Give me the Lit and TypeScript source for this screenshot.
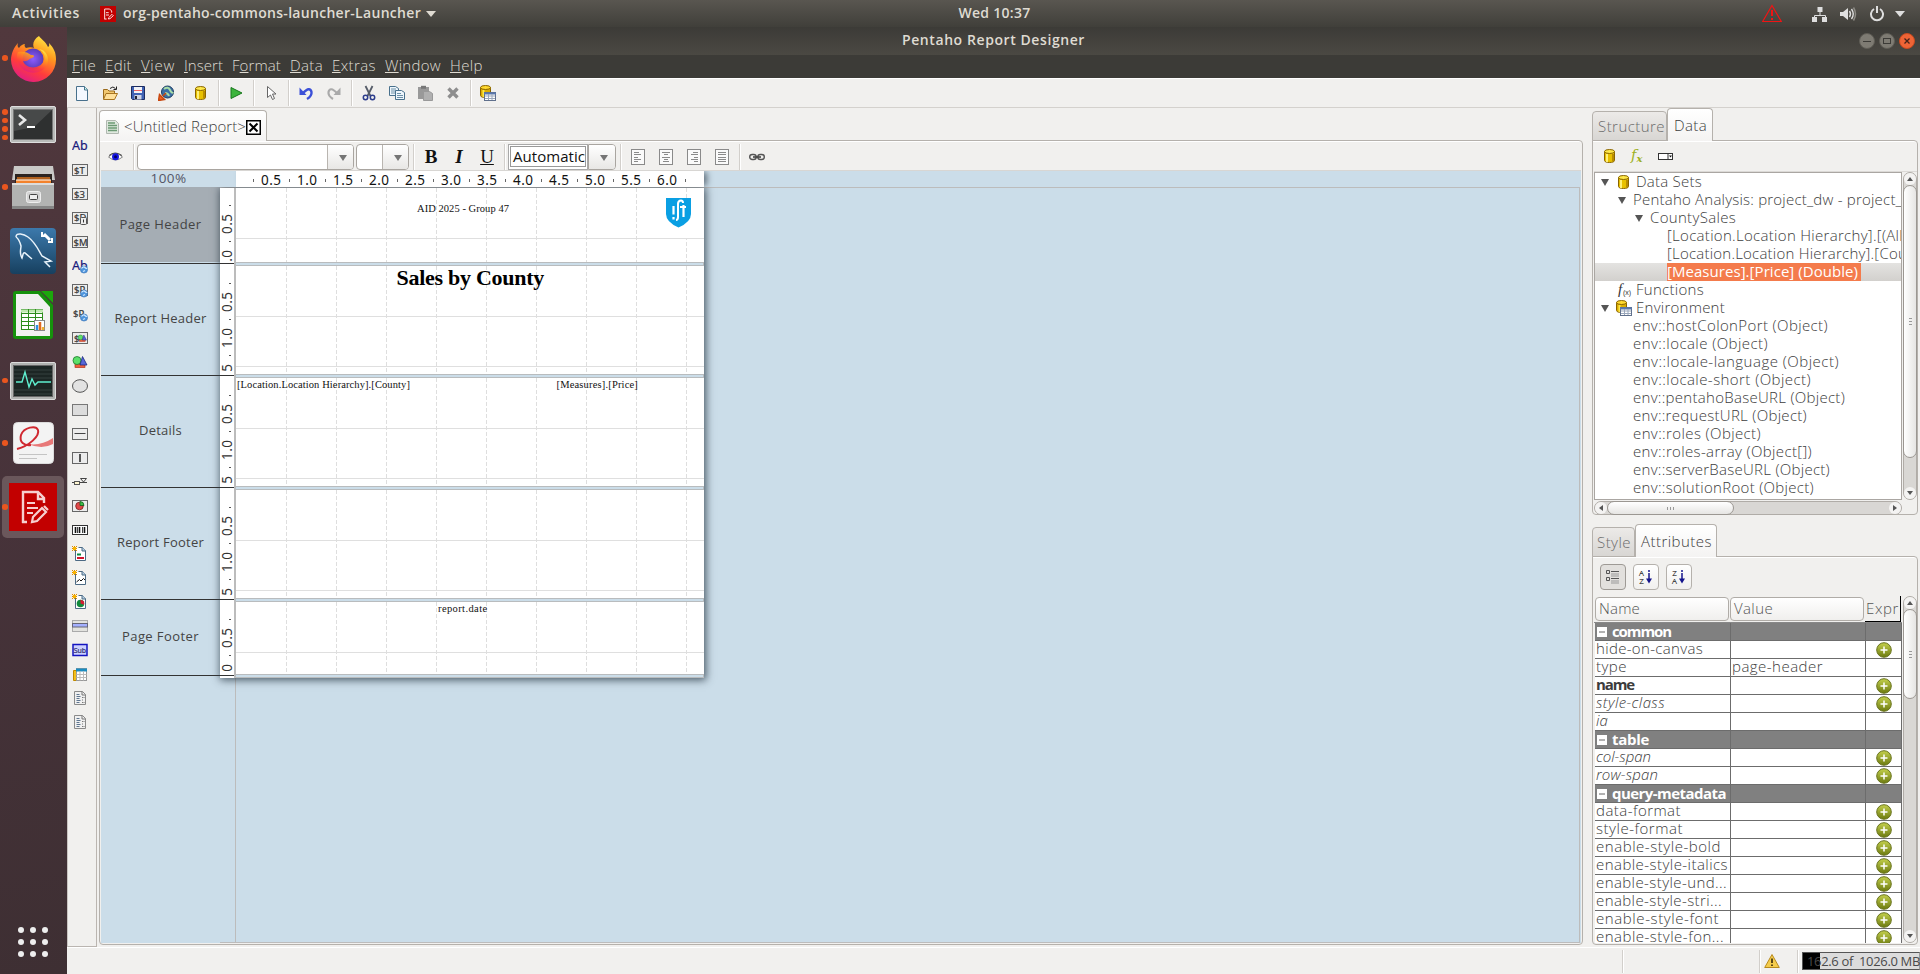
import { LitElement, html, svg, css } from "lit";
import { customElement, property } from "lit/decorators.js";
import { classMap } from "lit/directives/class-map.js";

/** Text run whose tracking is adjusted so that it fills an exact width. */
@customElement("fit-text")
class FitText extends LitElement {
  @property({ type: Number }) w = 0;
  static styles = css`
    :host { display: inline-block; white-space: pre; flex: none; transform: translateY(-1px); }
    span { display: inline-block; white-space: pre; }
  `;
  render() { return html`<span><slot></slot></span>`; }
  updated() {
    const s = this.renderRoot.querySelector("span") as HTMLElement;
    const n = (this.textContent || "").length;
    if (!this.w || !n) return;
    s.style.letterSpacing = "0px";
    const natural = s.getBoundingClientRect().width;
    s.style.letterSpacing = (this.w - natural) / n + "px";
  }
}

const t = (text: unknown, w: number) => html`<fit-text .w=${w}>${text}</fit-text>`;
const ic = (body: unknown, w = 16, h = 16, vb = `0 0 ${w} ${h}`) =>
  html`<svg class="ic" width=${w} height=${h} viewBox=${vb} fill="none">${body}</svg>`;

/* ---------- shared icon parts ---------- */
const cyl = svg`<path d="M2.500 3.500v9c0 1.200 2 2 5 2s5-.8 5-2v-9z" fill="#e8c100" stroke="#8a6500"/><path d="M5 6v8" stroke="#fff07a" stroke-width="2"/><path d="M11 6v7" stroke="#b98d00" stroke-width="2"/><ellipse cx="7.500" cy="3.500" rx="5" ry="2" fill="#ffe94a" stroke="#8a6500"/>`;
const cylTable = svg`<path d="M.5 2.500v8c0 1.200 2 2 5 2s5-.8 5-2v-8z" fill="#dcae00" stroke="#8a6500"/><path d="M3.500 5v7" stroke="#ffe84a" stroke-width="2"/><ellipse cx="5.500" cy="2.500" rx="5" ry="2" fill="#ffd92e" stroke="#8a6500"/><rect x="4.500" y="7.500" width="11" height="8" fill="#fff" stroke="#60708c"/><path d="M4 8.500h12" stroke="#5a78ac" stroke-width="2"/><path d="M5 11h10M5 13.500h10M8.500 9v6M12 9v6" stroke="#9aa7bb"/>`;
const star = svg`<path d="M0 0h1v1h1v-1h1v1h1v-1h1v1h-1v1h1v1h-1v1h1v1h-1v-1h-1v1h-1v-1h-1v1h-1v-1h1v-1h-1v-1h1v-1h-1z" fill="#e08c00"/><rect x="1" y="1" width="3" height="3" fill="#f8b400"/>`;
const page = svg`<path d="M3.500 3v11.500h10V4.500l-3-3H6.500" fill="#fff" stroke="#4d6a84"/><path d="M10 1v4h4" fill="#b6cde0" stroke="#4d6a84"/>`;
const box = svg`<rect x=".5" y="2.500" width="15" height="11" fill="#ececec" stroke="#666"/>`;
const tx = (x: number, y: number, s: string, c = "#333", size = 9.500) =>
  svg`<text x=${x} y=${y} font-family="Noto Sans, sans-serif" font-size=${size} fill=${c} stroke=${c} stroke-width=".2">${s}</text>`;
const globe = svg`<circle cx="12" cy="11.500" r="3.600" fill="#4f95dc" stroke="#3770b4" stroke-width=".6"/><path d="M9.500 10.500q2-2.500 3.500-1t2 .5M11 13.500l2-1" stroke="#cfe8ff" stroke-width="1.200"/>`;
const shapes = svg`<rect x="3" y="10" width="10" height="3.500" fill="#f0603c" stroke="#a0200c" stroke-width=".6"/><circle cx="5" cy="6.500" r="4" fill="#5ce06a" stroke="#207a2c" stroke-width=".8"/><path d="M10.500 2.500l4.500 8.500h-7z" fill="#5666d8" stroke="#1c2880" stroke-width=".8"/>`;
const doc = svg`<path d="M2.500 1.500h8l3 3v10h-11z" fill="#f0f0f0" stroke="#8a8a8a"/><path d="M10 1.500v3.500h3.500" stroke="#777"/><path d="M4.500 4.500h3M4.500 6.500h4M4.500 8.500h3M4.500 10.500h4M4.500 12.500h3" stroke="#5f7690"/><path d="M10.500 7v1M10.500 9.500v1M10.500 12v1M12 7v1M12 12v1" stroke="#777"/>`;

const PALETTE = [
  tx(0, 12, "Ab", "#18187a", 12.500),
  svg`${box}${tx(2, 11.500, "$T")}`,
  svg`${box}${tx(2, 11.500, "$3")}`,
  svg`${box}${tx(2, 11, "$D")}<rect x="8.500" y="7.500" width="6" height="7" rx="1" fill="#eee" stroke="#555"/><path d="M11.500 9.500v3" stroke="#333"/>`,
  svg`${box}${tx(1.500, 11.500, "$M")}`,
  svg`${tx(0, 12, "Ab", "#18187a", 12.500)}${globe}`,
  svg`${box}${tx(2, 11, "$P")}${globe}`,
  svg`${tx(1, 10.500, "$P")}${globe}`,
  svg`${box}${tx(2, 11.500, "$")}<g transform="translate(5.500,3.500) scale(.6)">${shapes}</g>`,
  shapes,
  svg`<ellipse cx="8" cy="8" rx="7.500" ry="6.300" fill="#e2e2e2" stroke="#555"/>`,
  svg`<rect x=".5" y="2.500" width="15" height="11" fill="#dcdcdc" stroke="#777"/>`,
  svg`${box}<path d="M2.500 7.500h11" stroke="#444"/>`,
  svg`${box}<path d="M8 4v8" stroke="#555" stroke-width="2"/>`,
  svg`<path d="M0 8.500h15M8.500 4.500h6l-3 3.500z" stroke="#444"/><rect x="2.500" y="7.500" width="5" height="3" fill="#fff6d0" stroke="#555"/>`,
  svg`${box}<circle cx="7.500" cy="8" r="3.800" fill="#e04848" stroke="#7c1c1c" stroke-width=".8"/><path d="M8 7.500v-4a4 4 0 0 1 4 4z" fill="#3ec04a" stroke="#145c1c" stroke-width=".8"/>`,
  svg`<rect x=".5" y="3.500" width="15" height="9" fill="#fff" stroke="#333"/><path d="M3.500 5v6M7.500 5v6M12.500 5v6" stroke="#111" stroke-width="1.600"/><path d="M5.500 5v6M10.500 5v6" stroke="#111" stroke-width=".8"/>`,
  svg`${page}${star}<path d="M5 8.500h4" stroke="#0c8a40" stroke-width="2"/><path d="M5 12h7" stroke="#d0142c" stroke-width="2"/>`,
  svg`${page}${star}<path d="M4.500 12l3-2.500 1.500 1.500 2.500-2.500 1.500 1.500" stroke="#111"/>`,
  svg`${page}${star}<circle cx="8.500" cy="9.500" r="3.800" fill="#128a3c"/><path d="M8.500 9.500V5.700a3.800 3.800 0 0 1 3.500 5z" fill="#d81c34"/>`,
  svg`<rect x=".5" y="2.500" width="15" height="11" fill="#e2e2de" stroke="#aaa"/><rect x=".5" y="5.500" width="15" height="3.500" fill="#a4b0ff" stroke="#667"/>`,
  svg`<rect x="1" y="2.500" width="14" height="11" fill="#ccd0ff" stroke="#1414c0" stroke-width="1.500"/>${tx(1.700, 10.700, "Sub", "#303070", 7)}`,
  svg`<path d="M1.500 4.500h3v10h-3z" fill="#f4c01c" stroke="#c08a00"/><rect x="4.500" y="2.500" width="10" height="12" fill="#fff" stroke="#999"/><path d="M4 4h11" stroke="#1c8cc0" stroke-width="3"/><path d="M4.500 8.500h10M4.500 11.500h10M8 5v9.500M11.500 5v9.500" stroke="#bbb"/>`,
  doc, doc,
];

const TOOLBAR: unknown[] = [
  svg`<path d="M2.500 1.500h8l3 3v11h-11z" fill="#f4f8ff" stroke="#48708c"/><path d="M10.500 1.500v3.500h3" fill="#cfe" stroke="#48708c"/>`,
  svg`<path d="M1.500 14V4.500h4l1.500 1.500h5.500v3" fill="#f2c870" stroke="#9a6a1c"/><path d="M1.500 14.500l2.500-6h11.500l-3 6z" fill="#ffe09a" stroke="#a87420"/><path d="M8 3.500q3-3 5.500 0M14.500 1.500v3h-3" stroke="#222"/>`,
  svg`<path d="M1.500 1.500h13v13h-12l-1-1z" fill="#4062b4" stroke="#1c2c60"/><rect x="4" y="2" width="8" height="6" fill="#f2f2f6"/><path d="M4 5.500h8" stroke="#e66" /><rect x="4.500" y="10" width="7" height="4.500" fill="#cfd4e4"/><path d="M6 11v3" stroke="#223" stroke-width="2"/>`,
  svg`<circle cx="9.500" cy="7" r="6" fill="#3c6ea4" stroke="#1c3c60"/><path d="M6 4q4-3 6 1t3 2M7 8q3 0 4 3" stroke="#a8dca8" stroke-width="2"/><path d="M.5 15.500l1-6 5 5zM5 11l3-3" fill="#f06020" stroke="#c84810" stroke-width="1.500"/>`,
  null,
  cyl,
  null,
  svg`<path d="M3 2.500l11 5.500-11 5.500z" fill="#3cb43c" stroke="#18781c"/>`,
  null,
  svg`<path d="M4.500 1.500v11l3-2.500 2 4.500 2-1-2-4.500h3.500z" fill="#fff" stroke="#666"/>`,
  null,
  svg`<path d="M5 8Q12 1 13.500 7q.5 4-4.500 7" stroke="#3c50d8" stroke-width="2.400"/><path d="M1.500 2.500v7.500h7z" fill="#3c50d8"/>`,
  svg`<path d="M11 8Q4 1 2.500 7q-.5 4 4.500 7" stroke="#aaa" stroke-width="2.200"/><path d="M14.500 2.500v7.500h-7z" fill="#aaa"/>`,
  null,
  svg`<path d="M4.500 1l5 10M11.500 1l-5 10" stroke="#555c68" stroke-width="1.800"/><circle cx="4.500" cy="12.500" r="2.200" stroke="#2c3c8c" stroke-width="1.500"/><circle cx="11.500" cy="12.500" r="2.200" stroke="#2c3c8c" stroke-width="1.500"/>`,
  svg`<path d="M.5 1.500h6l3 2v7h-9z" fill="#eef6fc" stroke="#48708c"/><path d="M2 4h5M2 6h5M2 8h4" stroke="#6c90a8"/><path d="M6.500 5.500h6l3 2v7h-9z" fill="#eef6fc" stroke="#48708c"/><path d="M8 8.500h4M8 10.500h6M8 12.500h6" stroke="#6c90a8"/>`,
  svg`<path d="M1 2h11v12H1z" fill="#999"/><path d="M4 .8h5v3H4z" fill="#777"/><path d="M6.500 6.500h6l3 2v7h-9z" fill="#b0b0b0" stroke="#999"/>`,
  svg`<path d="M3.500 3.500l9 9M12.500 3.500l-9 9" stroke="#8e8e8e" stroke-width="3.400"/>`,
  null,
  cylTable,
];

const MENUS: [string, string, string, number][] = [
  ["", "F", "ile", 24], ["", "E", "dit", 27], ["", "V", "iew", 34], ["", "I", "nsert", 39], ["F", "o", "rmat", 49],
  ["", "D", "ata", 33], ["", "E", "xtras", 44], ["", "W", "indow", 56], ["", "H", "elp", 33],
];

/* ---------- launcher ---------- */
const firefox = svg`<defs><linearGradient id="ff" x1=".8" y1="0" x2=".3" y2="1"><stop offset="0" stop-color="#fff04a"/><stop offset=".35" stop-color="#ff9a1e"/><stop offset=".7" stop-color="#ff3c3c"/><stop offset="1" stop-color="#e01c86"/></linearGradient><radialGradient id="fp"><stop offset="0" stop-color="#8c5cff"/><stop offset="1" stop-color="#5a3cb8"/></radialGradient></defs><path d="M29 1c2 3 7 6 9 11 2-1 1-3 1-4 5 5 7 10 7 16A22.500 22.500 0 0 1 1 25C1 19 4 12 8 8c-1 3 0 4 1 5 2-3 4-4 6-4-1 2 0 3 1 4 3-1 6-1 8 0-2-4 0-9 5-12z" fill="url(#ff)"/><circle cx="23" cy="24" r="10.500" fill="url(#fp)"/><path d="M8 17c5-1 10 0 13 3 4 0 4 2 1 3-4 1-4 4-9 3 3 8 16 9 21 0 2-5-1-10-5-12 7 1 11 8 8 16-4 9-20 11-27 1-3-5-4-10-2-14z" fill="url(#ff)" opacity=".9"/>`;
const LAUNCH: { dots: number; dy?: number; on?: boolean; icon: unknown }[] = [
  { dots: 1, icon: ic(firefox, 47, 47) },
  { dots: 4, dy: 2, icon: ic(svg`<rect x=".5" y=".5" width="45" height="36" rx="1.500" fill="#b9bbb9" stroke="#dedede"/><rect x="3.500" y="3.500" width="39" height="30" fill="#2e3030" stroke="#777"/><path d="M4 4h38L24 21 4 25z" fill="#fff" opacity=".12"/><path d="M9 9l6 5-6 5" stroke="#e8e8e8" stroke-width="2.600"/><path d="M17 21h8" stroke="#fff" stroke-width="2"/>`, 46, 37) },
  { dots: 1, icon: ic(svg`<path d="M2 0h39l2 14H0z" fill="#c9c9c7"/><rect x="3" y="8" width="37" height="12" fill="#2c2420"/><path d="M5 11h33v8H5z" fill="#b0601c"/><path d="M4 14h35v5H4z" fill="#f3822c"/><path d="M4 14h35" stroke="#fff" stroke-width="1.200"/><path d="M0 17h42v26H0z" fill="#b2b3b2"/><path d="M0 17h42v2H0z" fill="#dcdcdc"/><path d="M0 40h42v3H0z" fill="#858585"/><rect x="14.500" y="25.500" width="14" height="11" rx="2" fill="#d4d4d4" stroke="#eee"/><rect x="17.500" y="28.500" width="8" height="5" rx="1" fill="#eee" stroke="#444"/>`, 43, 43) },
  { dots: 0, icon: ic(svg`<defs><linearGradient id="ms" x2="0" y2="1"><stop offset="0" stop-color="#3c79ac"/><stop offset="1" stop-color="#17405f"/></linearGradient></defs><rect width="46" height="46" rx="4" fill="url(#ms)"/><path d="M6 9c0-5 8-3 12 0 7 5 10 12 14 19l9 5-6 1 5 5M6 9c3 2 4 5 5 9 0 3-2 7 1 12 1-3 1-6 3-5l7 6" stroke="#e8f2fa" stroke-width="1.500"/><path d="M34 6l6 6" stroke="#fff" stroke-width="3"/><path d="M32 4v4h4M38 14h4v-4" stroke="#fff" stroke-width="2"/>`, 46, 46) },
  { dots: 0, icon: ic(svg`<path d="M3 0h24l13 14v31q0 3-3 3H3q-3 0-3-3V3q0-3 3-3z" fill="#16920c"/><path d="M28 0h12v12z" fill="#1ca80c"/><path d="M3 3h22l12 13v29H3z" fill="#f1f1f0"/><rect x="8.500" y="18.500" width="21" height="20" fill="#fff" stroke="#2c8c1c"/><path d="M8 20h22" stroke="#bfe8b0" stroke-width="3"/><path d="M8 22.500h22M8 26.500h22M8 30.500h22M8 34.500h22M15.500 18v20M22.500 18v20" stroke="#2c8c1c"/><rect x="21.500" y="29.500" width="10" height="10" fill="#fff" stroke="#888"/><path d="M24 39v-5" stroke="#3090e0" stroke-width="2.500"/><path d="M27 39v-8" stroke="#e06a20" stroke-width="2.500"/><path d="M30 39v-3" stroke="#f0b030" stroke-width="2.500"/>`, 40, 48) },
  { dots: 1, dy: 2, icon: ic(svg`<rect x=".5" y=".5" width="45" height="37" rx="1.500" fill="#b1b3b1" stroke="#dcdcdc"/><rect x="3.500" y="3.500" width="39" height="31" fill="#1c2624" stroke="#666"/><path d="M4 8h38M4 12h38M4 16h38M4 28h38M4 32h38" stroke="#35403e"/><path d="M6 20h6l3-10 4 15 3-8 3 6 3-3h13" stroke="#5ff0d0" stroke-width="1.400"/>`, 46, 38) },
  { dots: 1, icon: ic(svg`<rect x=".5" y=".5" width="40" height="41" rx="4" fill="#f3f3f3" stroke="#dcdcdc"/><path d="M15 22q13 2 25-6v6q-11 6-25 0z" fill="#e87878"/><path d="M4 27C16 24 27 14 25 8 23 3 11 5 8 13c-2 7 3 11 10 10" stroke="#d02830" stroke-width="2"/><path d="M6 32.500h28M6 36.500h18" stroke="#c4c4c4"/>`, 41, 42) },
  { dots: 1, on: true, icon: ic(svg`<rect width="48" height="48" fill="#c20000"/><path d="M14 40V9h15l6 6v5M29 9v7h6M13 39h5" stroke="#f6d0d0" stroke-width="2.400"/><path d="M18 20h8M18 25h11M18 30h6" stroke="#f6d0d0" stroke-width="2.200"/><path d="M24 34l9-9 4 4-9 9-5 1zM35 23l4 4" stroke="#f6d0d0" stroke-width="2.200"/>`, 48, 48) },
];

/* ---------- report bands ---------- */
interface Item { text: string; x: number; y: number; w: number; big?: boolean }
const BANDS: { name: string; w: number; label: number; h: number; on?: boolean; items: Item[] }[] = [
  { name: "Page Header", w: 82, label: 76, h: 74, on: true, items: [{ text: "AID 2025 - Group 47", x: 181, y: 15, w: 92 }] },
  { name: "Report Header", w: 92, label: 112, h: 108, items: [{ text: "Sales by County", x: 160.500, y: 0, w: 147.500, big: true }] },
  { name: "Details", w: 43, label: 112, h: 108, items: [{ text: "[Location.Location Hierarchy].[County]", x: 1, y: 1, w: 173 }, { text: "[Measures].[Price]", x: 320.500, y: 1, w: 81.500 }] },
  { name: "Report Footer", w: 87, label: 112, h: 108, items: [] },
  { name: "Page Footer", w: 77, label: 76, h: 72, items: [{ text: "report.date", x: 202, y: 1, w: 49.500 }] },
];

/* ---------- data tree ---------- */
interface Node { d: number; text: string; w: number; open?: boolean; icon?: unknown; sel?: boolean }
const fxSmall = svg`<text x="2" y="12" font-family="Liberation Serif, serif" font-style="italic" font-size="15" fill="#333">f</text><text x="7" y="13" font-family="Liberation Sans, sans-serif" font-size="7" fill="#333">(x)</text>`;
const TREE: Node[] = [
  { d: 0, text: "Data Sets", w: 66, open: true, icon: cyl },
  { d: 1, text: "Pentaho Analysis: project_dw - project_", w: 269, open: true },
  { d: 2, text: "CountySales", w: 86, open: true },
  { d: 3, text: "[Location.Location Hierarchy].[(All", w: 236 },
  { d: 3, text: "[Location.Location Hierarchy].[Cou", w: 240 },
  { d: 3, text: "[Measures].[Price] (Double)", w: 191, sel: true },
  { d: 0, text: "Functions", w: 68, icon: fxSmall },
  { d: 0, text: "Environment", w: 89, open: true, icon: cylTable },
  ...([["hostColonPort (Object)", 195], ["locale (Object)", 135], ["locale-language (Object)", 206], ["locale-short (Object)", 178], ["pentahoBaseURL (Object)", 212], ["requestURL (Object)", 174], ["roles (Object)", 128], ["roles-array (Object[])", 179], ["serverBaseURL (Object)", 197], ["solutionRoot (Object)", 181]] as [string, number][])
    .map(([s, w]) => ({ d: 1, text: "env::" + s, w })),
];

/* ---------- attribute table ---------- */
type Row = [name: string, w: number, kind: "" | "group" | "bold" | "italic", plus: boolean, value?: string];
const ROWS: Row[] = [
  ["common", 59, "group", false], ["hide-on-canvas", 107, "", true], ["type", 31, "", false, "page-header"],
  ["name", 38, "bold", true], ["style-class", 69, "italic", true], ["ia", 12, "italic", false],
  ["table", 37, "group", false], ["col-span", 55, "italic", true], ["row-span", 62, "italic", true],
  ["query-metadata", 114, "group", false], ["data-format", 85, "", true], ["style-format", 87, "", true],
  ["enable-style-bold", 125, "", true], ["enable-style-italics", 132, "", true], ["enable-style-und...", 131, "", true],
  ["enable-style-stri...", 126, "", true], ["enable-style-font", 123, "", true], ["enable-style-fon...", 128, "", true],
];
const plus = ic(svg`<defs><linearGradient id="pl" x2="0" y2="1"><stop offset="0" stop-color="#c4d04c"/><stop offset="1" stop-color="#6c7a10"/></linearGradient></defs><circle cx="8" cy="8" r="7.300" fill="url(#pl)" stroke="#6a7420"/><path d="M8 4.500v7M4.500 8h7" stroke="#fff" stroke-width="1.500"/>`);

const tri = (dir: string) => {
  const d: Record<string, string> = { up: "M0 5l3-4 3 4z", down: "M0 1l3 4 3-4z", left: "M5 0L1 3l4 3z", right: "M1 0l4 3-4 3z" };
  return ic(svg`<path d=${d[dir]} fill="#555"/>`, 6, 6);
};

@customElement("app-root")
class AppRoot extends LitElement {
  static styles = css`
    :host { display: grid; grid-template-rows: 27px 1fr; width: 1920px; height: 974px; overflow: hidden;
      font-family: "Open Sans", "Noto Sans", sans-serif; font-size: 15px; color: #3c3c3c; background: #f1f0ee; line-height: 18px; }
    * { box-sizing: border-box; }
    svg { display: block; flex: none; }
    .side, .tab, .menu { font-weight: 300; }
    .topbar { display: grid; grid-template-columns: 1fr auto 1fr; align-items: center; background: linear-gradient(#595650, #403f3a);
      color: #dfdbd2; font-weight: 600; font-size: 14px; }
    .topbar .left { display: flex; align-items: center; padding-left: 12px; }
    .topbar .app { margin: 0 7px 0 20px; }
    .topbar .caret { margin-left: 5px; }
    .topbar .clock { transform: translateX(34.500px); }
    .topbar .tray { display: flex; justify-content: flex-end; align-items: center; padding-right: 15px; }
    .body { display: grid; grid-template-columns: 67px 1fr; min-height: 0; }
    .launcher { background: linear-gradient(170deg, #51383d, #47333a 50%, #3e2f33); display: flex; flex-direction: column; }
    .slot { height: 64px; display: grid; grid-template-columns: 9px 48px; align-items: center; flex: none; }
    .slot:first-child { padding-bottom: 2px; }
    .slot .dots { display: flex; flex-direction: column; gap: 3px; align-items: flex-end; padding-right: 1.500px; }
    .slot .dots i { width: 5.500px; height: 5.500px; border-radius: 50%; background: #e9561f; }
    .slot .pic { display: flex; justify-content: center; }
    .slot.low .pic, .slot.low .dots { padding-top: 3px; }
    .slot.on { background: #6a575b; border-radius: 5px; width: 62px; height: 62px; margin: 1px 0 0 2px; grid-template-columns: 7px 48px; }
    .apps { margin: auto 0 17px 18px; display: grid; grid-template-columns: repeat(3, 6px); gap: 6px; }
    .apps i { width: 6px; height: 6px; border-radius: 50%; background: #eee; }
    .window { display: flex; flex-direction: column; min-width: 0; }
    .title { height: 28px; background: linear-gradient(#3c3b37, #4b4943); color: #dfdbd2; font-weight: 600; font-size: 14px;
      display: grid; grid-template-columns: 1fr auto 1fr; align-items: center; }
    .title .ctl { display: flex; justify-content: flex-end; gap: 4px; padding-right: 5px; }
    .menu { height: 23px; background: #3c3b37; color: #dfdbd2; display: flex; align-items: center; padding: 0 0 1px 5px; gap: 9px; }
    .tools { height: 30px; display: flex; align-items: center; padding-left: 1px; border-bottom: 1px solid #d4d1cd; border-top: 1px solid #fff; flex: none; }
    .btn { width: 28px; display: flex; justify-content: center; flex: none; }
    .sep { width: 7px; height: 26px; flex: none; background: linear-gradient(90deg, transparent 3px, #d2cfcb 3px, #d2cfcb 4px, #fff 4px, #fff 5px, transparent 5px); }
    .main { flex: 1; display: flex; min-height: 0; }
    .palette { width: 30px; border-right: 1px solid #bab5b0; border-left: 1px solid #c8c4c0; border-bottom: 1px solid #bab5b0; height: 839px; padding: 26px 0 0 4px; }
    .palette div { height: 24px; display: flex; align-items: center; }
    .editor { width: 1484px; margin-left: 2px; display: flex; flex-direction: column; height: 837px; }
    .tabs { display: flex; align-items: flex-end; height: 33px; margin-bottom: -1px; position: relative; flex: none; }
    .tab { border: 1px solid #b5b1ac; border-bottom: none; border-radius: 4px 4px 0 0; display: flex; align-items: center; height: 33px;
      background: linear-gradient(#fff, #f4f3f2); padding-top: 1px; }
    .tab.off { height: 30px; background: linear-gradient(#eceae8, #d8d6d3); border-bottom: 1px solid #b5b1ac; color: #6c6c6c; padding-top: 2px; }
    .tab.doc { width: 168px; height: 31px; padding: 2px 0 0 5px; }
    .tab.doc svg.ic:first-child { margin-right: 3px; }
    .panel { border: 1px solid #b5b1ac; border-radius: 0 4px 4px 4px; box-shadow: inset 0 1px #fff; display: flex; flex-direction: column; }
    .editor .panel { flex: 1; padding: 0 1px 1px 1px; min-height: 0; }
    .fmt { height: 30px; display: flex; align-items: center; border-bottom: 1px solid #d8d6d3; flex: none; padding: 2px 0 0 1px; }
    .combo { display: flex; height: 26px; border: 1px solid #a9a5a0; border-radius: 4px; background: #fff; overflow: hidden; flex: none; }
    .combo .arrow { margin-left: auto; border-left: 1px solid #b9b5b0; display: flex; align-items: center; justify-content: center; width: 26px;
      background: linear-gradient(#fff, #e8e7e5); padding: 3px 0 0 4px; }
    .c1 { width: 217px; } .c2 { width: 53px; margin: 0 1px 0 2px; }
    .auto { width: 80px; height: 26px; border: 1px solid #a9a9a9; background: #fff; color: #111; padding: 1px; }
    .auto div { border: 1px solid #999; height: 21px; padding: 0 0 0 2px; line-height: 20px; }
    .c3 { width: 28px; border-radius: 0 4px 4px 0; margin-right: 1px; }
    .c3 .arrow { border-left: none; }
    .biu { font: bold 19px/24px "Liberation Serif", serif; color: #111; width: 28px; text-align: center; flex: none; }
    .biu u { font-weight: 500; }
    .view { flex: 1; background: #cbdde9; overflow: hidden; min-height: 0; display: flex; flex-direction: column; }
    .hrow { display: flex; height: 16px; flex: none; }
    .pct { width: 135px; text-align: center; font-size: 13.500px; line-height: 17px; color: #556; }
    .hruler { width: 468px; background: #fff; box-shadow: 4px 0 6px -1px #63727e; }
    .work { flex: 1; display: flex; margin-right: 1px; }
    .labels { width: 119px; border-top: 1px solid #a5adb4; }
    .label { display: flex; align-items: center; justify-content: center; border-bottom: 1px solid #333; font-size: 13px; padding-bottom: 2px; color: #444; }
    .label.on { background: linear-gradient(#a5adb4 74px, #cbdde9 74px); }
    .port { flex: 1; display: flex; border-top: 1px solid #bcbcbc; border-bottom: 1px solid #bcbcbc; border-right: 1px solid #bcbcbc; clip-path: inset(0 0 0 -20px);
      background: linear-gradient(90deg, transparent 15px, #bcbcbc 15px, #bcbcbc 16px, transparent 16px); }
    .paper { width: 484px; height: 490px; background: #fff; display: flex; box-shadow: 1px 1px 8px 1px rgba(40, 55, 68, .8); }
    .vruler { width: 14px; }
    .vcell { border-bottom: 1px solid #333; width: 15px; overflow: hidden; }
    .canvas { width: 470px; border-left: 2px solid #bcbcbc; }
    .band { position: relative; overflow: hidden; background: #fff; }
    .divider { height: 4px; background: #cbdde9; border: 1px solid #b9bcbe; margin-left: -1px; }
    .item { position: absolute; white-space: pre; font: 10.500px/14px "Liberation Serif", serif; color: #111; }
    .item.big { font-size: 22px; line-height: 26px; font-weight: bold; color: #000; }
    .logo { position: absolute; left: 430px; top: 10px; }
    .side { width: 326px; margin-left: 9px; display: flex; flex-direction: column; }
    .side .panel { padding: 0 0 0 1px; }
    .data { height: 375px; flex: none; }
    .dbar { height: 31px; display: flex; align-items: center; padding-left: 8px; gap: 11px; flex: none; border-bottom: 1px solid #dcdad7; }
    .split { display: grid; grid-template-columns: 308px 14px; gap: 1px; }
    .tree { height: 328px; border: 1px solid #aaa6a2; background: #fff; overflow: hidden; }
    .node { height: 18px; display: flex; align-items: center; white-space: pre; }
    .node > span { flex: none; }
    .node .tw { width: 18px; padding-left: 6px; margin-right: 3px; }
    .node .pic { width: 20px; }
    .node.sel { background: linear-gradient(#e4e3e1, #d2d0cd); }
    .node.sel .txt { background: #f47b4c; color: #fff; width: 194px; height: 18px; font-weight: 400; }
    .sb { display: flex; border: 1px solid #b0aca7; border-radius: 7px; background: #d9d7d4; }
    .sb.v { flex-direction: column; width: 14px; }
    .sb.h { height: 14px; margin-top: 1px; }
    .sb b { flex: none; display: flex; align-items: center; justify-content: center; width: 12px; height: 12px; background: #f4f3f2; border-radius: 6px; }
    .sb .thumb { border: 1px solid #9b9792; border-radius: 7px; background: linear-gradient(90deg, #fff, #e6e5e3); display: flex; align-items: center; justify-content: center; margin: 0 -1px; flex: none; }
    .sb.h .thumb { background: linear-gradient(#fff, #e6e5e3); margin: -1px 0; }
    .sb u { flex: 1; }
    .tabs.two { margin-top: 8px; height: 34px; }
    .attrs { height: 389px; flex: none; overflow: hidden; }
    .abar { display: flex; gap: 7px; padding: 7px 0 0 6px; height: 39px; flex: none; }
    .abar div { width: 26px; height: 26px; border: 1px solid #b5b1ac; border-radius: 4px; background: linear-gradient(#fff, #f1f0ee); display: flex; align-items: center; justify-content: center; }
    .abar div.on { background: #e2e0dd; border-color: #9e9a95; }
    .table { height: 347px; overflow: hidden; }
    .thead { display: flex; height: 26px; gap: 1px; color: #555; }
    .thead div { height: 24px; border: 1px solid #b0aca7; border-radius: 4px; background: linear-gradient(#fff, #f0efed); margin-top: 1px; padding: 2px 0 0 3px; }
    .thead .a { width: 134px; margin-left: 1px; } .thead .b { width: 134px; }
    .thead .c { width: 36px; border: none; border-right: 1px solid #000; border-bottom: 1px solid #000; border-radius: 0; margin-top: 0; height: 26px; padding-top: 4px; padding-left: 1px; background: #f1f0ee; overflow: hidden; }
    .row { display: grid; grid-template-columns: 136px 135px 36px; height: 18px; margin-left: 1px; }
    .row > div { border-right: 1px solid #6c6c6c; border-bottom: 1px solid #6c6c6c; background: #fff; padding-left: 1px; line-height: 16px; overflow: hidden; display: flex; }
    .row > div:last-child { justify-content: center; align-items: center; padding: 0; }
    .row.group > div { background: #808080; color: #fff; font-weight: 700; }
    .row.group > div:first-child { padding-left: 2px; gap: 5px; align-items: center; }
    .row.bold > div:first-child { font-weight: 700; }
    .row.italic > div:first-child { font-style: italic; }
    .rows { border-top: 1px solid #888; }
    .status { height: 27px; border-top: 1px solid #fff; display: flex; align-items: center; justify-content: flex-end; flex: none; }
    .status .sep { height: 23px; }
    .mem { width: 118px; height: 18px; border: 1px solid #555; border-right-color: #999; background: linear-gradient(90deg, #000 17px, #dcdcdc 17px); padding-left: 4px; font-size: 13px; line-height: 18px; color: #4a4a4a; }
  `;

  private grid(h: number) {
    const v = Array.from({ length: 9 }, (_, i) => 50.5 + i * 50);
    const hz = [50.5, 100.5].filter((y) => y < h);
    return html`<svg width="468" height=${h} fill="none">
      ${v.map((x) => svg`<path d=${`M${x} 0V${h}`} stroke="#dedede" stroke-dasharray="4 2"/>`)}
      ${hz.map((y) => svg`<path d=${`M0 ${y}H468`} stroke="#dfdfdf"/>`)}
    </svg>`;
  }

  private vcell(h: number, first: boolean) {
    const o = first ? 0 : 2;
    return html`<div class="vcell" style=${`height:${h}px`}><svg width="14" height=${h - 3} fill="none">
      ${[1, 2, 3].map((i) => svg`<text transform=${`translate(11.5 ${o + i * 36}) rotate(-90)`} text-anchor="middle" textLength="20" font-family="Noto Sans, sans-serif" font-size="13.500" fill="#333">${(i / 2).toFixed(1)}</text>
        <path d=${`M9 ${o + i * 36 - 18.5}h2`} stroke="#555"/>`)}
    </svg></div>`;
  }

  private hruler() {
    const n = Array.from({ length: 12 }, (_, i) => i + 1);
    return html`<svg class="hruler" width="468" height="16" fill="none">
      ${n.map((i) => svg`<text x=${i * 36 - 1} y="14" text-anchor="middle" textLength="20" font-family="Noto Sans, sans-serif" font-size="13.500" fill="#111">${(i / 2).toFixed(1)}</text>`)}
      ${[0, ...n].map((i) => svg`<path d=${`M${i * 36 + 17.5} 8v3`} stroke="#666"/>`)}
    </svg>`;
  }

  private vscroll(thumb: number) {
    return html`<div class="sb v"><b>${tri("up")}</b><div class="thumb" style=${`height:${thumb}px`}>${ic(svg`<path d="M0 .5h3M0 3.500h3M0 6.500h3" stroke="#999"/>`, 3, 7)}</div><u></u><b>${tri("down")}</b></div>`;
  }

  private arrow() { return html`<div class="arrow">${ic(svg`<path d="M0 0h8L4 6z" fill="#757575"/>`, 8, 6)}</div>`; }

  private align(lines: string) {
    return html`<div class="btn">${ic(svg`<rect x="1.500" y=".5" width="13" height="15" fill="#fafafa" stroke="#8a8a8a"/><path d=${lines} stroke="#8a8a8a"/>`)}</div>`;
  }

  render() {
    return html`
      <div class="topbar">
        <div class="left">${t("Activities", 68)}
          <svg class="app" width="16" height="16" viewBox="0 0 48 48" fill="none"><rect width="48" height="48" fill="#c20000"/><path d="M14 40V9h15l6 6v5M14 39h6M18 20h8M18 27h9M26 35l10-10 4 4-10 9-5 1z" stroke="#fbdede" stroke-width="3"/></svg>
          ${t("org-pentaho-commons-launcher-Launcher", 298)}
          <svg class="caret" width="10" height="6"><path d="M0 0h10L5 6z" fill="#dfdbd2"/></svg></div>
        <div class="clock">${t("Wed 10:37", 72)}</div>
        <div class="tray">
          ${ic(svg`<path d="M10 1.500L19.300 17.500H.7z" stroke="#f01414" stroke-width="1.200"/><path d="M10 6v6M10 14v2" stroke="#f01414" stroke-width="2"/>`, 20, 19)}
          ${ic(svg`<path d="M8 6v3M2.500 12V9.500h11V12" stroke="#dedede"/><path d="M5.500 1h5v5h-5zM0 11h5v5H0zM10 11h5v5h-5z" fill="#dedede"/>`, 46, 16, "-30 0 46 16")}
          ${ic(svg`<path d="M0 5h3l5-4v12L3 9H0z" fill="#e0e0e0"/><path d="M9.500 4q2 3 0 6M11.500 2q3.500 5 0 10" stroke="#dedede" stroke-width="1.400"/><path d="M13.500 0.500q4 6.500 0 13" stroke="#8c8a84" stroke-width="1.500"/>`, 29, 14, "-12 0 29 14")}
          ${ic(svg`<path d="M4 3a6 6 0 1 0 6 0" stroke="#dedede" stroke-width="2"/><path d="M7 0v7" stroke="#dedede" stroke-width="2"/>`, 27, 16, "-13 0 27 16")}
          ${ic(svg`<path d="M0 0h10L5 6z" fill="#dedede"/>`, 21, 6, "-11 0 21 6")}
        </div>
      </div>
      <div class="body">
        <div class="launcher">
          ${LAUNCH.map((l) => html`<div class=${classMap({ slot: true, low: !!l.dy, on: !!l.on })}><div class="dots">${Array.from({ length: l.dots }, () => html`<i></i>`)}</div><div class="pic">${l.icon}</div></div>`)}
          <div class="apps">${Array.from({ length: 9 }, () => html`<i></i>`)}</div>
        </div>
        <div class="window">
          <div class="title"><span></span>${t("Pentaho Report Designer", 183)}
            <div class="ctl">
              ${ic(svg`<circle cx="8" cy="8" r="7.500" fill="#7e7b73" stroke="#5f5d56"/><path d="M4 8.500h8" stroke="#3c3b37"/>`)}
              ${ic(svg`<circle cx="8" cy="8" r="7.500" fill="#7e7b73" stroke="#5f5d56"/><rect x="4.500" y="5.500" width="7" height="5" stroke="#3c3b37"/>`)}
              ${ic(svg`<circle cx="8" cy="8" r="7.500" fill="#ee6436" stroke="#c84a20"/><path d="M5.500 5.500l5 5M10.500 5.500l-5 5" stroke="#45231a" stroke-width="1.300"/>`)}
            </div></div>
          <div class="menu">${MENUS.map(([a, u, b, w]) => t(html`${a}<u>${u}</u>${b}`, w))}</div>
          <div class="tools">${TOOLBAR.map((i) => (i ? html`<div class="btn">${ic(i)}</div>` : html`<div class="sep"></div>`))}</div>
          <div class="main">
            <div class="palette">${PALETTE.map((p) => html`<div>${ic(p)}</div>`)}</div>
            <div class="editor">
              <div class="tabs"><div class="tab doc">
                ${ic(svg`<path d="M1.500 1.500h9l3 3v10h-12z" fill="#dfe8df" stroke="#b0b8b0"/><path d="M3 4h7M3 6.500h9M3 9h9M3 11.500h9" stroke="#6c9a74" stroke-width="1.400"/>`)}
                ${t("<Untitled Report>", 122)}
                ${ic(svg`<rect x=".75" y=".75" width="13.500" height="13.500" fill="#fff" stroke="#000" stroke-width="1.500"/><path d="M3.500 3.500l8 8M11.500 3.500l-8 8" stroke="#000" stroke-width="2"/>`, 15, 15)}
              </div></div>
              <div class="panel">
                <div class="fmt">
                  <div class="btn">${ic(svg`<path d="M.5 8q7-7 14 0-7 6-14 0z" fill="#fff" stroke="#888"/><path d="M1 6.500q6-5 13 0" stroke="#444"/><circle cx="7.500" cy="7.800" r="3.500" fill="#1414e0"/><circle cx="7.500" cy="7.800" r="1.500" fill="#000060"/>`)}</div>
                  <div class="sep"></div>
                  <div class="combo c1">${this.arrow()}</div>
                  <div class="combo c2">${this.arrow()}</div>
                  <div class="sep"></div>
                  <div class="biu">B</div><div class="biu"><i>I</i></div><div class="biu"><u>U</u></div>
                  <div class="sep"></div>
                  <div class="auto"><div>${t("Automatic", 72)}</div></div>
                  <div class="combo c3">${this.arrow()}</div>
                  <div class="sep"></div>
                  ${this.align("M4 3.500h5M4 5.500h7M4 8.500h4M4 10.500h7M4 12.500h4")}
                  ${this.align("M4 3.500h8M6 5.500h4M4 8.500h8M6 10.500h4M5 12.500h6")}
                  ${this.align("M7 3.500h5M5 5.500h7M8 8.500h4M5 10.500h7M8 12.500h4")}
                  ${this.align("M4 3.500h8M4 5.500h8M4 8.500h8M4 10.500h8M4 12.500h8")}
                  <div class="sep"></div>
                  <div class="btn">${ic(svg`<rect x=".7" y="5.500" width="6.500" height="5" rx="2.500" stroke="#555" stroke-width="1.400"/><rect x="8.800" y="5.500" width="6.500" height="5" rx="2.500" stroke="#555" stroke-width="1.400"/><path d="M4 8h8" stroke="#444" stroke-width="1.600"/>`)}</div>
                </div>
                <div class="view">
                  <div class="hrow"><div class="pct">${t("100%", 36)}</div>${this.hruler()}</div>
                  <div class="work">
                    <div class="labels">${BANDS.map((b) => html`<div class=${classMap({ label: true, on: !!b.on })} style=${`height:${b.label}px`}>${t(b.name, b.w)}</div>`)}</div>
                    <div class="port"><div class="paper">
                      <div class="vruler">${BANDS.map((b, i) => this.vcell(b.label, i === 0))}</div>
                      <div class="canvas">${BANDS.map((b, i) => html`
                        <div class="band" style=${`height:${b.h}px`}>${this.grid(b.h)}
                          ${b.items.map((it) => html`<div class=${classMap({ item: true, big: !!it.big })} style=${`left:${it.x}px;top:${it.y}px`}>${t(it.text, it.w)}</div>`)}
                          ${i === 0 ? html`<svg class="logo" width="26" height="50" fill="none"><rect width="26" height="40" fill="#fff"/><path d="M0 0h25v16q0 8-12.500 13.500Q0 24 0 16z" fill="#0a9fe3"/><path d="M7.500 8v8.500M7.500 19v2.500" stroke="#fff" stroke-width="2.200"/><path d="M10 22q2 0 2-3V6q0-3.500 3-3.500 2 0 2 2.500" stroke="#fff" stroke-width="2"/><path d="M17.500 7v12M14 9h6" stroke="#fff" stroke-width="2.200"/></svg>` : ""}
                        </div><div class="divider"></div>`)}</div>
                    </div></div>
                  </div>
                </div>
              </div>
            </div>
            <div class="side">
              <div class="tabs">
                <div class="tab off" style="width:75px;padding-left:5px">${t("Structure", 67)}</div>
                <div class="tab" style="width:46px;padding-left:6px">${t("Data", 33)}</div>
              </div>
              <div class="panel data">
                <div class="dbar">${ic(cyl)}
                  ${ic(svg`<text x="2" y="13" font-family="DejaVu Serif, serif" font-style="italic" font-size="14.500" fill="#9db024">f</text><text x="7.500" y="14.500" font-family="DejaVu Serif, serif" font-style="italic" font-weight="bold" font-size="10" fill="#9db024">x</text>`, 18, 18)}
                  ${ic(svg`<rect x=".5" y="5.500" width="14" height="6" fill="#fff" stroke="#333"/><path d="M10 5v7" stroke="#333"/><path d="M11 7.500h3l-1.500 2z" fill="#111"/>`)}
                </div>
                <div class="split">
                  <div class="tree">${TREE.map((n) => html`<div class=${classMap({ node: true, sel: !!n.sel })} style=${`padding-left:${n.d * 17}px`}>
                    <span class="tw">${n.open ? ic(svg`<path d="M0 0h8L4 7z" fill="#555"/>`, 8, 7) : ""}</span>${n.icon ? html`<span class="pic">${ic(n.icon)}</span>` : ""}<span class="txt">${t(n.text, n.w)}</span></div>`)}</div>
                  ${this.vscroll(273)}
                </div>
                <div class="split"><div class="sb h"><b>${tri("left")}</b><div class="thumb" style="width:127px">${ic(svg`<path d="M.5 0v3M3.500 0v3M6.500 0v3" stroke="#999"/>`, 7, 3)}</div><u></u><b>${tri("right")}</b></div></div>
              </div>
              <div class="tabs two">
                <div class="tab off" style="width:43px;padding-left:4px">${t("Style", 34)}</div>
                <div class="tab" style="width:82px;padding-left:5px">${t("Attributes", 71)}</div>
              </div>
              <div class="panel attrs">
                <div class="abar">
                  <div class="on">${ic(svg`<path d="M1.500 1.500h3v3h-3zM1.500 8.500h3v3h-3z" stroke="#555"/><path d="M6 2.500h8M6 9.500h8" stroke="#555"/><path d="M6 5h8M6 7h8M6 12h8M6 14h8" stroke="#999"/>`)}</div>
                  <div>${ic(svg`${tx(1, 7, "A", "#222", 8)}${tx(1.300, 15, "Z", "#222", 8)}<path d="M11 1v2M11 4v8" stroke="#14148c" stroke-width="1.500"/><path d="M8 9.500h6l-3 5z" fill="#14148c"/>`)}</div>
                  <div>${ic(svg`${tx(1.300, 7, "Z", "#222", 8)}${tx(1, 15, "A", "#222", 8)}<path d="M11 1v2M11 4v8" stroke="#14148c" stroke-width="1.500"/><path d="M8 9.500h6l-3 5z" fill="#14148c"/>`)}</div>
                </div>
                <div class="split">
                  <div class="table">
                    <div class="thead"><div class="a">${t("Name", 41)}</div><div class="b">${t("Value", 39)}</div><div class="c">${t("Expr", 33)}</div></div>
                    <div class="rows">${ROWS.map(([name, w, kind, p, value]) => html`<div class=${"row " + kind}>
                      <div>${kind === "group" ? ic(svg`<rect x=".5" y=".5" width="9" height="9" fill="#fff" stroke="#fff"/><path d="M2 5h6" stroke="#666"/>`, 10, 10) : ""}${t(name, w)}</div>
                      <div>${value ? t(value, 91) : ""}</div><div>${p ? plus : ""}</div></div>`)}</div>
                  </div>
                  ${this.vscroll(90)}
                </div>
              </div>
            </div>
          </div>
          <div class="status">
            <div class="sep" style="margin-right:130px"></div><div class="sep" style="margin-right:1px"></div>
            ${ic(svg`<path d="M8 1.500L15.300 14.500H.7z" fill="#f4cc4c" stroke="#b88a1c"/><path d="M8 5.500v4.500M8 11.500v1.500" stroke="#4a3a10" stroke-width="1.800"/>`)}
            <div class="sep" style="margin:0 1px 0 14px"></div>
            <div class="mem">${t("162.6 of  1026.0 MB", 113)}</div>
          </div>
        </div>
      </div>`;
  }
}
